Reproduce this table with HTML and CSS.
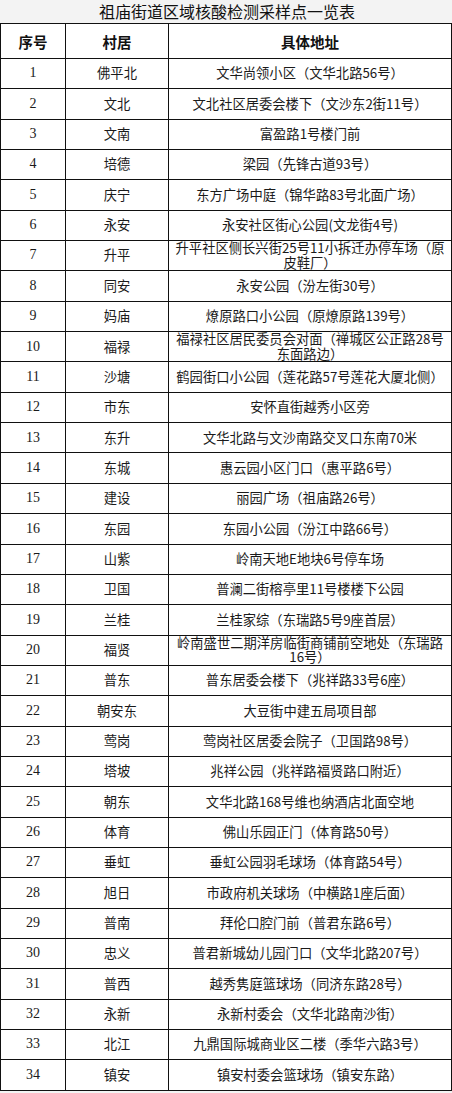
FILE: index.html
```html
<!DOCTYPE html>
<html lang="zh-CN">
<head>
<meta charset="utf-8">
<title>祖庙街道区域核酸检测采样点一览表</title>
<link rel="stylesheet" href="styles.css">
</head>
<body>
<div class="sheet">
  <div class="title">祖庙街道区域核酸检测采样点一览表</div>
  <table class="grid">
    <colgroup>
      <col class="c-no">
      <col class="c-vil">
      <col class="c-addr">
    </colgroup>
    <thead>
      <tr><th>序号</th><th>村居</th><th>具体地址</th></tr>
    </thead>
    <tbody>
      <tr><td class="num">1</td><td>佛平北</td><td>文华尚领小区（文华北路56号）</td></tr>
      <tr><td class="num">2</td><td>文北</td><td>文北社区居委会楼下（文沙东2街11号）</td></tr>
      <tr><td class="num">3</td><td>文南</td><td>富盈路1号楼门前</td></tr>
      <tr><td class="num">4</td><td>培德</td><td>梁园（先锋古道93号）</td></tr>
      <tr><td class="num">5</td><td>庆宁</td><td>东方广场中庭（锦华路83号北面广场）</td></tr>
      <tr><td class="num">6</td><td>永安</td><td>永安社区街心公园(文龙街4号)</td></tr>
      <tr><td class="num">7</td><td>升平</td><td>升平社区侧长兴街25号11小拆迁办停车场（原皮鞋厂）</td></tr>
      <tr><td class="num">8</td><td>同安</td><td>永安公园（汾左街30号）</td></tr>
      <tr><td class="num">9</td><td>妈庙</td><td>燎原路口小公园（原燎原路139号）</td></tr>
      <tr><td class="num">10</td><td>福禄</td><td>福禄社区居民委员会对面（禅城区公正路28号东面路边）</td></tr>
      <tr><td class="num">11</td><td>沙塘</td><td>鹤园街口小公园（莲花路57号莲花大厦北侧）</td></tr>
      <tr><td class="num">12</td><td>市东</td><td>安怀直街越秀小区旁</td></tr>
      <tr><td class="num">13</td><td>东升</td><td>文华北路与文沙南路交叉口东南70米</td></tr>
      <tr><td class="num">14</td><td>东城</td><td>惠云园小区门口（惠平路6号）</td></tr>
      <tr><td class="num">15</td><td>建设</td><td>丽园广场（祖庙路26号）</td></tr>
      <tr><td class="num">16</td><td>东园</td><td>东园小公园（汾江中路66号）</td></tr>
      <tr><td class="num">17</td><td>山紫</td><td>岭南天地E地块6号停车场</td></tr>
      <tr><td class="num">18</td><td>卫国</td><td>普澜二街榕亭里11号楼楼下公园</td></tr>
      <tr><td class="num">19</td><td>兰桂</td><td>兰桂家综（东瑞路5号9座首层）</td></tr>
      <tr><td class="num">20</td><td>福贤</td><td>岭南盛世二期洋房临街商铺前空地处（东瑞路16号）</td></tr>
      <tr><td class="num">21</td><td>普东</td><td>普东居委会楼下（兆祥路33号6座）</td></tr>
      <tr><td class="num">22</td><td>朝安东</td><td>大豆街中建五局项目部</td></tr>
      <tr><td class="num">23</td><td>莺岗</td><td>莺岗社区居委会院子（卫国路98号）</td></tr>
      <tr><td class="num">24</td><td>塔坡</td><td>兆祥公园（兆祥路福贤路口附近）</td></tr>
      <tr><td class="num">25</td><td>朝东</td><td>文华北路168号维也纳酒店北面空地</td></tr>
      <tr><td class="num">26</td><td>体育</td><td>佛山乐园正门（体育路50号）</td></tr>
      <tr><td class="num">27</td><td>垂虹</td><td>垂虹公园羽毛球场（体育路54号）</td></tr>
      <tr><td class="num">28</td><td>旭日</td><td>市政府机关球场（中横路1座后面）</td></tr>
      <tr><td class="num">29</td><td>普南</td><td>拜伦口腔门前（普君东路6号）</td></tr>
      <tr><td class="num">30</td><td>忠义</td><td>普君新城幼儿园门口（文华北路207号）</td></tr>
      <tr><td class="num">31</td><td>普西</td><td>越秀隽庭篮球场（同济东路28号）</td></tr>
      <tr><td class="num">32</td><td>永新</td><td>永新村委会（文华北路南沙街）</td></tr>
      <tr><td class="num">33</td><td>北江</td><td>九鼎国际城商业区二楼（季华六路3号）</td></tr>
      <tr><td class="num">34</td><td>镇安</td><td>镇安村委会篮球场（镇安东路）</td></tr>
    </tbody>
  </table>
</div>
</body>
</html>
```

FILE: styles.css
```css
html, body {
  margin: 0;
  padding: 0;
  background: #f3f3f3;
}

.sheet {
  width: 452px;
  font-family: "Noto Sans CJK SC", sans-serif;
  color: #1a1a1a;
}

.title {
  height: 23px;
  line-height: 23px;
  text-align: center;
  font-family: "Noto Sans CJK SC", sans-serif;
  font-size: 16px;
  color: #111;
  padding-left: 2px;
}

.grid {
  width: 451px;
  border-collapse: collapse;
  table-layout: fixed;
  background: #fff;
}

.c-no { width: 65px; }
.c-vil { width: 103px; }
.c-addr { width: 283px; }

.grid th,
.grid td {
  border: 1px solid #111;
  text-align: center;
  vertical-align: middle;
  padding: 0 4px;
}

.grid th {
  height: 34px;
  font-weight: 700;
  font-size: 14.5px;
  color: #111;
}

.grid td {
  height: 29.35px;
  font-size: 13.3px;
  line-height: 14.5px;
}

.grid td.num {
  font-family: "Liberation Serif", serif;
  font-size: 14px;
}
```
